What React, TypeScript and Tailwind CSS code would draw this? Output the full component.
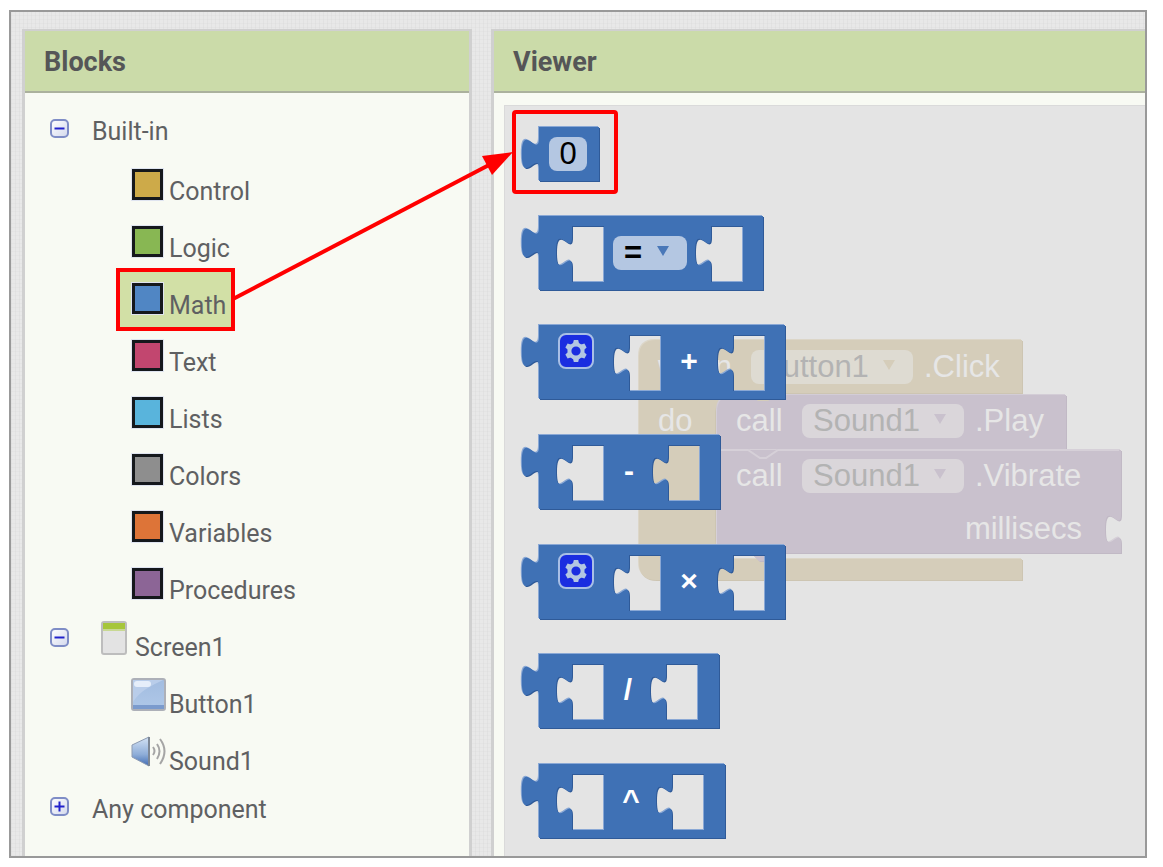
import { type ReactNode } from "react";

const TAB = 2.15;
const NOTCH = 2;

function tabDown(s: number) {
  return `c0 ${10 * s} ${-8 * s} ${-8 * s} ${-8 * s} ${7.5 * s}s${8 * s} ${-2.5 * s} ${8 * s} ${7.5 * s}`;
}

function outline(w: number, h: number) {
  const s = TAB;
  return `M0 0H${w}V${h}H0V${20 * s}c0 ${-10 * s} ${-8 * s} ${8 * s} ${-8 * s} ${-7.5 * s}s${8 * s} ${2.5 * s} ${8 * s} ${-7.5 * s}z`;
}

function socket(x: number, y: number, w: number, h: number) {
  return `M${x + w} ${y}H${x}V${y + 11}${tabDown(NOTCH)}V${y + h}H${x + w}z`;
}

function Bevel({ d, fill, light, dark }: { d: string; fill: string; light: string; dark: string }) {
  return (
    <>
      <path d={d} fill={light} fillRule="evenodd" />
      <path d={d} fill={dark} fillRule="evenodd" transform="translate(2 2)" />
      <path d={d} fill={fill} fillRule="evenodd" transform="translate(1 1)" />
    </>
  );
}

type BlockProps = { top: number; width: number; height: number; sockets: number[]; children: ReactNode };

function MathBlock({ top, width, height, sockets, children }: BlockProps) {
  const d = outline(width - 2, height - 2) + sockets.map((x) => socket(x - 2, 10, 32, 56)).join("");
  return (
    <div className="absolute left-[33px]" style={{ top, width, height }}>
      <svg className="absolute inset-0 h-full w-full overflow-visible" aria-hidden="true">
        <Bevel d={d} fill="#3f71b5" light="#8aa8d5" dark="#2f5a98" />
      </svg>
      <div className="relative flex h-full items-start text-[31px] leading-[36px] text-white">{children}</div>
    </div>
  );
}

function Operator({ className, children }: { className: string; children: ReactNode }) {
  return <span className={`${className} mt-[19px] w-10 text-center text-[30px] font-bold`}>{children}</span>;
}

function Mutator() {
  return (
    <button
      type="button"
      aria-label="Configure block"
      className="mt-[9px] ml-[20px] flex h-9 w-9 items-center justify-center rounded-lg border-2 border-[#a9bfe6] bg-[#1a2de0]"
    >
      <svg width="24" height="24" viewBox="0 0 24 24" aria-hidden="true">
        <circle cx="12" cy="12" r="6.600" fill="none" stroke="#b3c6e2" strokeWidth="4" />
        {[0, 60, 120, 180, 240, 300].map((a) => (
          <path key={a} d="M8.800 5L9.800 1H14.200L15.200 5z" fill="#b3c6e2" transform={`rotate(${a} 12 12)`} />
        ))}
      </svg>
    </button>
  );
}

function Dropdown({ label, value, className, arrow }: { label: string; value: string; className: string; arrow: string }) {
  return (
    <span className={`${className} relative flex h-[34px] shrink-0 rounded-lg`}>
      <select aria-label={label} className="h-full w-full appearance-none rounded-lg bg-transparent pl-[11px] leading-[34px] outline-none">
        <option>{value}</option>
      </select>
      <svg className="pointer-events-none absolute top-[10px] right-[18px]" width="12" height="10" viewBox="0 0 12 10" aria-hidden="true">
        <path d="M0 0H12L6 10z" fill={arrow} />
      </svg>
    </span>
  );
}

function WorkspaceBlocks() {
  const event =
    "M17 0H383V53H100Q78 55 76 72V200Q78 220 98 219H383V240H17Q0 240 0 223V17Q0 0 17 0z";
  const play = "M95 55H427V109H78V72Q78 55 95 55z";
  const vibrate = `M78 110H482V174${tabDown(NOTCH)}V213H139L131 221H120L112 213H88Q78 213 78 203z`;
  return (
    <div className="absolute top-[233px] left-[133px] h-[242px] w-[486px] text-[31px] leading-[36px] text-[#e6e6e6]">
      <svg className="absolute inset-0 h-full w-full overflow-visible" aria-hidden="true">
        <Bevel d={event} fill="#d5cdba" light="#dcd6c8" dark="#cdc5b2" />
        <Bevel d={play} fill="#c9c1cd" light="#d3cdd6" dark="#c1b9c5" />
        <path d="M111 55L120 62H130L139 55z" fill="#d5cdba" />
        <Bevel d={vibrate} fill="#c9c1cd" light="#d6d0d8" dark="#c1b9c5" />
        <path d="M109 109L122 118H128L141 109V112H109z" fill="#c9c1cd" />
        <path d="M79 111H110L122 119H128L140 111H481" fill="none" stroke="#d6d0d8" strokeWidth="2" />
      </svg>
      <div className="relative flex h-[55px] items-center">
        <span className="w-[113px] pl-[20px]">when</span>
        <Dropdown label="Button" value="Button1" className="w-[162px] bg-[#dedbd2] text-[#b3b3b3]" arrow="#d5cdba" />
        <span className="pl-[11px]">.Click</span>
      </div>
      <div className="relative flex h-[53px] items-center">
        <span className="w-[98px] pl-5">do</span>
        <span className="w-[66px]">call</span>
        <Dropdown label="Sound to play" value="Sound1" className="w-[162px] bg-[#dad6da] text-[#b3b3b3]" arrow="#c9c1cd" />
        <span className="pl-[11px]">.Play</span>
      </div>
      <div className="relative flex h-[57px] items-center pl-[98px]">
        <span className="w-[66px]">call</span>
        <Dropdown label="Sound to vibrate" value="Sound1" className="w-[162px] bg-[#dad6da] text-[#b3b3b3]" arrow="#c9c1cd" />
        <span className="pl-[11px]">.Vibrate</span>
      </div>
      <div className="relative flex h-[50px] items-center justify-end pr-[42px]">millisecs</div>
    </div>
  );
}

function Expander({ open, label, className }: { open: boolean; label: string; className: string }) {
  return (
    <button type="button" aria-label={label} aria-expanded={open} className={`${className} h-[19px] w-[19px] shrink-0`}>
      <svg width="19" height="19" viewBox="0 0 19 19" aria-hidden="true">
        <defs>
          <linearGradient id="expander" x1="0" y1="0" x2="1" y2="1">
            <stop offset="0" stopColor="#ffffff" />
            <stop offset="1" stopColor="#d3d8ec" />
          </linearGradient>
        </defs>
        <rect x="1" y="1" width="17" height="17" rx="4" fill="url(#expander)" stroke="#7f8dc6" strokeWidth="2" />
        <path d={open ? "M4.500 9.500H14.500" : "M4.500 9.500H14.500M9.500 4.500V14.500"} stroke="#2222cc" strokeWidth="2" />
      </svg>
    </button>
  );
}

const drawers = [
  { name: "Control", color: "bg-[#cdaa49]" },
  { name: "Logic", color: "bg-[#88b753]" },
  { name: "Math", color: "bg-[#5086c4]" },
  { name: "Text", color: "bg-[#c2466f]" },
  { name: "Lists", color: "bg-[#59b4dc]" },
  { name: "Colors", color: "bg-[#8e8e8e]" },
  { name: "Variables", color: "bg-[#dd7438]" },
  { name: "Procedures", color: "bg-[#8c6596]" },
];

function Tree() {
  return (
    <ul className="text-[25px] leading-[30px] text-[#5f6062]">
      <li>
        <div className="flex h-16 items-start pt-6 pl-[25px]">
          <Expander open label="Collapse Built-in" className="mt-0.5" />
          <span className="ml-[23px]">Built-in</span>
        </div>
        <ul>
          {drawers.map((d) => (
            <li key={d.name} className="flex h-[57px] pl-[94px]">
              <button
                type="button"
                className={
                  d.name === "Math"
                    ? "relative flex items-start bg-[#d2e0a6] pt-3 pr-1.5 pl-[13px] outline-4 -outline-offset-1 outline-[#ff0000]"
                    : "flex items-start pt-3 pr-1.5 pl-[13px]"
                }
              >
                <span className={`${d.color} h-[31px] w-[31px] border-3 border-[#15181c] outline-1 outline-[#dfe4f0]`} />
                <span className="mt-2 ml-1.5">{d.name}</span>
              </button>
            </li>
          ))}
        </ul>
      </li>
      <li>
        <div className="flex h-[57px] items-start pt-2 pl-[25px]">
          <Expander open label="Collapse Screen1" className="mt-[7px]" />
          <svg className="ml-8 shrink-0" width="26" height="34" viewBox="0 0 26 34" aria-hidden="true">
            <rect x="1" y="1" width="24" height="32" rx="2" fill="#e3e3e3" stroke="#bdbdbd" strokeWidth="2" />
            <path d="M2 2H24V8H2z" fill="#a6c63b" />
            <path d="M2 8H24V10H2z" fill="#c8d893" />
          </svg>
          <span className="ml-2 pt-3">Screen1</span>
        </div>
        <ul>
          <li className="flex h-[57px] items-start pt-2 pl-[106px]">
            <svg className="shrink-0" width="35" height="33" viewBox="0 0 35 33" aria-hidden="true">
              <defs>
                <linearGradient id="key" x1="0" y1="0" x2="0" y2="1">
                  <stop offset="0" stopColor="#a2bce0" />
                  <stop offset="1" stopColor="#afc8e8" />
                </linearGradient>
              </defs>
              <rect x="1" y="1" width="33" height="31" rx="2" fill="url(#key)" stroke="#adb0b8" strokeWidth="2" />
              <path d="M2 27H33V31H2z" fill="#7b9bcd" />
              <path d="M2 2H32C20 8 10 12 2 24z" fill="#b9cdea" />
              <rect x="3" y="3" width="17" height="6" rx="3" fill="#e6eefa" />
            </svg>
            <span className="ml-[3px] pt-3">Button1</span>
          </li>
          <li className="flex h-[57px] items-start pt-2 pl-[106px]">
            <svg className="shrink-0" width="35" height="33" viewBox="0 0 35 33" aria-hidden="true">
              <defs>
                <linearGradient id="horn" x1="0" y1="0" x2="0" y2="1">
                  <stop offset="0.1" stopColor="#c9daf0" />
                  <stop offset="0.6" stopColor="#8eadd8" />
                  <stop offset="1" stopColor="#416cb3" />
                </linearGradient>
              </defs>
              <path d="M1 10L18 2V31L1 22z" fill="url(#horn)" stroke="#8d9bb2" />
              <path d="M18 2V31" stroke="#7d8795" strokeWidth="2" />
              <path d="M22 12Q25 16 22 20M26 9Q31 16 26 24M29 4Q38 16 29 29" fill="none" stroke="#a5a5a5" strokeWidth="2" />
            </svg>
            <span className="ml-[3px] pt-3">Sound1</span>
          </li>
        </ul>
      </li>
      <li className="flex h-[50px] items-start pt-[11px] pl-[25px]">
        <Expander open={false} label="Expand Any component" className="mt-0.5" />
        <span className="ml-[23px]">Any component</span>
      </li>
    </ul>
  );
}

function PanelTitle({ children }: { children: ReactNode }) {
  return (
    <h2 className="h-16 border-t-2 border-b-2 border-t-[#d0d0d0] border-b-[#abb19d] bg-[#cbdba9] pl-[19px] text-[27px] leading-[62px] font-bold text-[#555657]">
      {children}
    </h2>
  );
}

export default function App() {
  return (
    <main className="flex min-h-screen bg-white pt-2.5 pr-4 pb-[9px] pl-[9px] font-[Roboto,sans-serif]">
      <div className="relative flex flex-1 gap-[19px] overflow-hidden border-2 border-[#999999] bg-[#e8e8e8] bg-[repeating-linear-gradient(0deg,#d8d8d840_0_1px,transparent_1px_4px),repeating-linear-gradient(90deg,#d4d4d450_0_1px,transparent_1px_4px)] pt-[17px] pl-[11px]">
        <section className="w-[450px] shrink-0 border-x-3 border-[#d0d0d0] bg-[#f8faf3]">
          <PanelTitle>Blocks</PanelTitle>
          <Tree />
        </section>
        <section className="flex min-w-0 flex-1 flex-col border-l-3 border-[#d0d0d0] bg-[#f8faf3]">
          <PanelTitle>Viewer</PanelTitle>
          <div className="relative mt-3 ml-2.5 min-h-[751px] flex-1 overflow-hidden border-t border-l border-[#dadada] bg-[#e4e4e4] font-['Liberation_Sans',Arial,sans-serif]">
            <WorkspaceBlocks />
            <MathBlock top={20} width={62} height={56} sockets={[]}>
              <input
                aria-label="Number"
                defaultValue="0"
                className="mt-[11px] ml-[11px] h-[34px] w-[38px] rounded-lg bg-[#b4c7e2] text-center text-black outline-none"
              />
            </MathBlock>
            <MathBlock top={109} width={226} height={76} sockets={[35, 174]}>
              <span className="mt-[21px] ml-[75px] font-bold">
                <Dropdown label="Comparison" value="=" className="w-[74px] bg-[#b4c7e2] text-black" arrow="#4a78b8" />
              </span>
            </MathBlock>
            <MathBlock top={218} width={248} height={76} sockets={[92, 196]}>
              <Mutator />
              <Operator className="ml-[75px]">+</Operator>
            </MathBlock>
            <MathBlock top={328} width={183} height={76} sockets={[35, 131]}>
              <Operator className="ml-[71px]">-</Operator>
            </MathBlock>
            <MathBlock top={438} width={248} height={76} sockets={[92, 196]}>
              <Mutator />
              <Operator className="ml-[75px]">×</Operator>
            </MathBlock>
            <MathBlock top={547} width={182} height={76} sockets={[35, 129]}>
              <Operator className="ml-[70px]">/</Operator>
            </MathBlock>
            <MathBlock top={657} width={188} height={76} sockets={[35, 135]}>
              <Operator className="ml-[73px]">^</Operator>
            </MathBlock>
            <div className="absolute top-[4px] left-[7px] h-[84px] w-[106px] rounded-sm border-4 border-[#ff0000]" />
          </div>
        </section>
        <svg className="pointer-events-none absolute top-0 left-0" width="510" height="300" aria-hidden="true">
          <path d="M222 287L478 153" stroke="#ff0000" strokeWidth="4" />
          <path d="M471 144L502 140L481 163z" fill="#ff0000" />
        </svg>
      </div>
    </main>
  );
}
